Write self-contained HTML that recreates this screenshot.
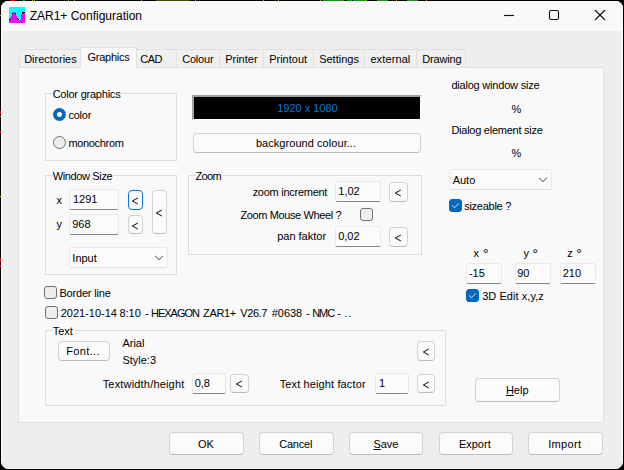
<!DOCTYPE html>
<html><head><meta charset="utf-8"><title>ZAR1+ Configuration</title>
<style>
html,body{margin:0;padding:0;background:#000;overflow:hidden}
body{width:624px;height:470px;position:relative;font-family:"Liberation Sans",sans-serif;font-size:11px;color:#000}
div,span,svg{position:absolute;box-sizing:border-box}
.t{white-space:pre;line-height:14px}
u{text-decoration:underline;text-underline-offset:1px}
#win{left:1px;top:1px;width:622px;height:468px;background:#eeeeee;border-radius:7px;border:1px solid #fcfcfc}
#tb{left:1px;top:1px;width:622px;height:30px;background:#f9f9f9;border-radius:7px 7px 0 0}
#panel{left:18px;top:67px;width:586px;height:356px;background:#f9f9f9;border:1px solid #e0e0e0}
.tab{top:49px;height:19px;background:#f0f0f0;border:1px solid #e0e0e0;border-bottom:none}
.tab.sel{top:47px;height:21px;background:#f9f9f9;border-bottom:none}
.gb{border:1px solid #dcdcdc}
.gl{background:#f9f9f9;height:12px}
.btn{background:#fbfbfb;border:1px solid #d2d2d2;border-bottom-color:#bcbcbc;border-radius:4px}
.btn.f{border:1.5px solid #0b72d0;border-bottom-color:#0b72d0}
.in{background:#fbfbfb;border:1px solid #e9e9e9;border-bottom:1px solid #868686;border-radius:2.5px}
.cmb{background:#fbfbfb;border:1px solid #e9e9e9;border-bottom-color:#dcdcdc;border-radius:2px}
.cb{width:13px;height:13px;border:1px solid #707070;border-radius:3px;background:#eeeeee}
.cb.on{border-color:#0067c0;background:#0067c0}
.rb{width:13px;height:13px;border:1px solid #707070;border-radius:50%;background:#eeeeee}
.rb.on{border:4px solid #0067c0;background:#fff}
</style></head>
<body>
<div style="left:11px;top:0;width:4px;height:1px;background:#d01010"></div><div style="left:23px;top:0;width:2px;height:1px;background:#10c010"></div><div style="left:32px;top:0;width:1px;height:1px;background:#b0b000"></div><div style="left:34px;top:0;width:1px;height:1px;background:#b0b000"></div><div style="left:68px;top:0;width:1px;height:1px;background:#b0b000"></div><div style="left:74px;top:0;width:1px;height:1px;background:#b0b000"></div><div style="left:141px;top:0;width:1px;height:1px;background:#b0b000"></div><div style="left:156px;top:0;width:34px;height:1px;background:#4a4a00"></div><div style="left:195px;top:0;width:1px;height:1px;background:#b0b000"></div><div style="left:263px;top:0;width:1px;height:1px;background:#b0b000"></div><div style="left:278px;top:0;width:1px;height:1px;background:#b0b000"></div><div style="left:320px;top:0;width:1px;height:1px;background:#b0b000"></div><div style="left:323px;top:0;width:21px;height:1px;background:#0c9a0c"></div><div style="left:347px;top:0;width:5px;height:1px;background:#0c9a0c"></div><div style="left:353px;top:0;width:13px;height:1px;background:#0c9a0c"></div><div style="left:366px;top:0;width:1px;height:1px;background:#b0b000"></div><div style="left:377px;top:0;width:11px;height:1px;background:#0c9a0c"></div><div style="left:396px;top:0;width:1px;height:1px;background:#b0b000"></div><div style="left:407px;top:0;width:11px;height:1px;background:#0c9a0c"></div><div style="left:426px;top:0;width:1px;height:1px;background:#b0b000"></div><div style="left:0;top:15px;width:1px;height:1px;background:#c0c000"></div><div style="left:0;top:111px;width:1px;height:3px;background:#d01010"></div><div style="left:0;top:116px;width:1px;height:1px;background:#c0c000"></div><div style="left:0;top:131px;width:1px;height:2px;background:#d01010"></div><div style="left:0;top:196px;width:1px;height:1px;background:#c0c000"></div><div style="left:0;top:258px;width:1px;height:4px;background:#d01010"></div><div style="left:0;top:265px;width:1px;height:2px;background:#d01010"></div>
<div id="win"></div><div id="tb"></div>
<svg style="left:9px;top:7px" width="16" height="16" viewBox="0 0 16 16" shape-rendering="crispEdges"><rect width="16" height="16" fill="#00ffff"/><rect x="4" y="5" width="2" height="1" fill="#ff00ff"/><rect x="13" y="5" width="3" height="1" fill="#000"/><rect x="3" y="6" width="1" height="1" fill="#000"/><rect x="4" y="6" width="2" height="1" fill="#ff00ff"/><rect x="6" y="6" width="1" height="1" fill="#000"/><rect x="13" y="6" width="1" height="1" fill="#000"/><rect x="14" y="6" width="2" height="1" fill="#ff00ff"/><rect x="3" y="7" width="4" height="1" fill="#ff00ff"/><rect x="13" y="7" width="3" height="1" fill="#ff00ff"/><rect x="3" y="8" width="4" height="1" fill="#ff00ff"/><rect x="12" y="8" width="1" height="1" fill="#000"/><rect x="13" y="8" width="3" height="1" fill="#ff00ff"/><rect x="2" y="9" width="6" height="1" fill="#ff00ff"/><rect x="12" y="9" width="4" height="1" fill="#ff00ff"/><rect x="2" y="10" width="6" height="1" fill="#ff00ff"/><rect x="12" y="10" width="4" height="1" fill="#ff00ff"/><rect x="1" y="11" width="1" height="1" fill="#000"/><rect x="2" y="11" width="6" height="1" fill="#ff00ff"/><rect x="8" y="11" width="1" height="1" fill="#000"/><rect x="12" y="11" width="4" height="1" fill="#ff00ff"/><rect x="0" y="12" width="1" height="1" fill="#000"/><rect x="1" y="12" width="8" height="1" fill="#ff00ff"/><rect x="9" y="12" width="1" height="1" fill="#000"/><rect x="10" y="12" width="1" height="1" fill="#fff"/><rect x="12" y="12" width="4" height="1" fill="#ff00ff"/><rect x="0" y="13" width="16" height="1" fill="#ff00ff"/><rect x="0" y="14" width="16" height="1" fill="#ff00ff"/><rect x="0" y="15" width="16" height="1" fill="#ff00ff"/></svg>
<svg style="left:495px;top:1px" width="128" height="30" viewBox="495 1 128 30" fill="none" stroke="#111" stroke-width="1.15"><path d="M504 15.5H514"/><rect x="549.5" y="10.5" width="9" height="9" rx="1.5"/><path d="M595 10L605 20M605 10L595 20"/></svg>
<div class="tab" style="left:19px;top:49px;width:62px;height:19px;"></div>
<div class="tab" style="left:136px;top:49px;width:41px;height:19px;"></div>
<div class="tab" style="left:176px;top:49px;width:44px;height:19px;"></div>
<div class="tab" style="left:219px;top:49px;width:45px;height:19px;"></div>
<div class="tab" style="left:263px;top:49px;width:51px;height:19px;"></div>
<div class="tab" style="left:313px;top:49px;width:52px;height:19px;"></div>
<div class="tab" style="left:364px;top:49px;width:53px;height:19px;"></div>
<div class="tab" style="left:416px;top:49px;width:50px;height:19px;"></div>
<div id="panel"></div>
<div class="tab sel" style="left:80px;top:47px;width:57px;height:21px;"></div>
<div class="gb" style="left:45px;top:93px;width:132px;height:68px;"></div>
<div class="gl" style="left:53px;top:87px;width:67.5px;height:12px;"></div>
<div class="gb" style="left:45px;top:175px;width:132px;height:100px;"></div>
<div class="gl" style="left:53px;top:169px;width:59.5px;height:12px;"></div>
<div class="gb" style="left:188px;top:175px;width:234px;height:80px;"></div>
<div class="gl" style="left:196px;top:169px;width:25.5px;height:12px;"></div>
<div class="gb" style="left:45px;top:330px;width:401px;height:76px;"></div>
<div class="gl" style="left:53px;top:324px;width:21.5px;height:12px;"></div>
<div class="rb on" style="left:53px;top:108px;width:13px;height:13px;"></div>
<div class="rb" style="left:53px;top:136px;width:13px;height:13px;"></div>
<div class="in" style="left:69px;top:189px;width:50px;height:21px;"></div>
<div class="in" style="left:69px;top:214px;width:50px;height:21px;"></div>
<div class="in" style="left:335px;top:181px;width:46px;height:21px;"></div>
<div class="in" style="left:335px;top:226px;width:46px;height:21px;"></div>
<div class="in" style="left:192px;top:373px;width:34px;height:21px;"></div>
<div class="in" style="left:375px;top:373px;width:34px;height:21px;"></div>
<div class="in" style="left:466px;top:263px;width:36px;height:21px;"></div>
<div class="in" style="left:515px;top:263px;width:36px;height:21px;"></div>
<div class="in" style="left:560px;top:263px;width:36px;height:21px;"></div>
<div class="cmb" style="left:69px;top:247px;width:99px;height:21px;"></div>
<svg style="left:154px;top:254.7px" width="10" height="6" viewBox="0 0 10 6" fill="none" stroke="#4a4a4a" stroke-width="1"><path d="M1 0.8L5 4.6L9 0.8"/></svg>
<div class="cmb" style="left:449px;top:169px;width:103px;height:21px;"></div>
<svg style="left:538px;top:176.7px" width="10" height="6" viewBox="0 0 10 6" fill="none" stroke="#4a4a4a" stroke-width="1"><path d="M1 0.8L5 4.6L9 0.8"/></svg>
<div class="" style="left:192px;top:95px;width:229px;height:25px;background:#000;border-top:2px solid #a0a0a0;border-left:2px solid #a0a0a0;border-right:1px solid #fff;border-bottom:1px solid #fff"></div>
<div class="btn " style="left:193px;top:133px;width:228px;height:20px;"></div>
<div class="btn f" style="left:128px;top:190px;width:15px;height:20px;"></div>
<div class="btn " style="left:128px;top:215px;width:15px;height:19px;"></div>
<div class="btn " style="left:152px;top:190px;width:15px;height:44px;"></div>
<div class="btn " style="left:389px;top:182px;width:19px;height:20px;"></div>
<div class="btn " style="left:389px;top:227px;width:19px;height:20px;"></div>
<div class="btn " style="left:58px;top:341px;width:52px;height:20px;"></div>
<div class="btn " style="left:417px;top:341px;width:18px;height:20px;"></div>
<div class="btn " style="left:230px;top:374px;width:19px;height:19px;"></div>
<div class="btn " style="left:417px;top:374px;width:18px;height:19px;"></div>
<div class="btn " style="left:475px;top:378px;width:85px;height:24px;"></div>
<div class="btn " style="left:169px;top:432px;width:75px;height:23px;"></div>
<div class="btn " style="left:259px;top:432px;width:75px;height:23px;"></div>
<div class="btn " style="left:349px;top:432px;width:74px;height:23px;"></div>
<div class="btn " style="left:439px;top:432px;width:74px;height:23px;"></div>
<div class="btn " style="left:528px;top:432px;width:75px;height:23px;"></div>
<div class="cb" style="left:360px;top:208px;width:13px;height:13px;"></div>
<div class="cb" style="left:44px;top:286px;width:13px;height:13px;"></div>
<div class="cb" style="left:45px;top:306px;width:13px;height:13px;"></div>
<div class="cb on" style="left:449px;top:199px;width:13px;height:13px;"></div>
<svg style="left:449px;top:199px" width="13" height="13" viewBox="0 0 13 13" fill="none" stroke="#eaf2fa" stroke-width="0.95"><path d="M3.1 6.5L5.6 8.7L9.8 4.4"/></svg>
<div class="cb on" style="left:466px;top:289px;width:13px;height:13px;"></div>
<svg style="left:466px;top:289px" width="13" height="13" viewBox="0 0 13 13" fill="none" stroke="#eaf2fa" stroke-width="0.95"><path d="M3.1 6.5L5.6 8.7L9.8 4.4"/></svg>
<svg style="left:131.05px;top:195.5px" width="8" height="10" viewBox="0 0 8 10" fill="none" stroke="#000" stroke-width="0.95"><path d="M6.9 2L1.3 5L6.9 8"/></svg>
<svg style="left:131.05px;top:220.8px" width="8" height="10" viewBox="0 0 8 10" fill="none" stroke="#000" stroke-width="0.95"><path d="M6.9 2L1.3 5L6.9 8"/></svg>
<svg style="left:155.05px;top:207.6px" width="8" height="10" viewBox="0 0 8 10" fill="none" stroke="#000" stroke-width="0.95"><path d="M6.9 2L1.3 5L6.9 8"/></svg>
<svg style="left:394px;top:187.75px" width="8" height="10" viewBox="0 0 8 10" fill="none" stroke="#000" stroke-width="0.95"><path d="M6.9 2L1.3 5L6.9 8"/></svg>
<svg style="left:394px;top:232.5px" width="8" height="10" viewBox="0 0 8 10" fill="none" stroke="#000" stroke-width="0.95"><path d="M6.9 2L1.3 5L6.9 8"/></svg>
<svg style="left:422.25px;top:346.6px" width="8" height="10" viewBox="0 0 8 10" fill="none" stroke="#000" stroke-width="0.95"><path d="M6.9 2L1.3 5L6.9 8"/></svg>
<svg style="left:235.25px;top:379.1px" width="8" height="10" viewBox="0 0 8 10" fill="none" stroke="#000" stroke-width="0.95"><path d="M6.9 2L1.3 5L6.9 8"/></svg>
<svg style="left:422.25px;top:379.6px" width="8" height="10" viewBox="0 0 8 10" fill="none" stroke="#000" stroke-width="0.95"><path d="M6.9 2L1.3 5L6.9 8"/></svg>
<span class="t" style="left:29.65px;top:8.84px;font-size:12px;">ZAR1+ Configuration</span>
<span class="t" style="left:24.15px;top:52.19px;">Directories</span>
<span class="t" style="left:87.40px;top:50.19px;letter-spacing:-0.231px;">Graphics</span>
<span class="t" style="left:140.15px;top:52.19px;letter-spacing:-0.435px;">CAD</span>
<span class="t" style="left:182.15px;top:52.19px;letter-spacing:-0.174px;">Colour</span>
<span class="t" style="left:225.15px;top:52.19px;">Printer</span>
<span class="t" style="left:269.15px;top:52.19px;">Printout</span>
<span class="t" style="left:319.15px;top:52.19px;">Settings</span>
<span class="t" style="left:370.40px;top:52.19px;letter-spacing:0.111px;">external</span>
<span class="t" style="left:422.15px;top:52.19px;letter-spacing:-0.155px;">Drawing</span>
<span class="t" style="left:52.65px;top:87.19px;letter-spacing:-0.224px;">Color graphics</span>
<span class="t" style="left:68.40px;top:108.19px;letter-spacing:-0.217px;">color</span>
<span class="t" style="left:68.40px;top:136.19px;letter-spacing:-0.330px;">monochrom</span>
<span class="t" style="left:52.65px;top:169.19px;letter-spacing:-0.354px;">Window Size</span>
<span class="t" style="left:56.40px;top:193.19px;">x</span>
<span class="t" style="left:72.90px;top:192.19px;">1291</span>
<span class="t" style="left:56.40px;top:217.19px;">y</span>
<span class="t" style="left:72.15px;top:217.19px;">968</span>
<span class="t" style="left:72.33px;top:251.19px;">Input</span>
<span class="t" style="left:277.15px;top:101.19px;color:#0b76d8;">1920 x 1080</span>
<span class="t" style="left:255.90px;top:136.19px;letter-spacing:0.057px;">background colour...</span>
<span class="t" style="left:195.40px;top:169.19px;letter-spacing:-0.580px;">Zoom</span>
<span class="t" style="left:252.65px;top:185.19px;letter-spacing:-0.270px;">zoom increment</span>
<span class="t" style="left:338.32px;top:184.19px;">1,02</span>
<span class="t" style="left:240.40px;top:208.19px;letter-spacing:-0.379px;">Zoom Mouse Wheel ?</span>
<span class="t" style="left:277.15px;top:229.19px;">pan faktor</span>
<span class="t" style="left:338.15px;top:229.19px;">0,02</span>
<span class="t" style="left:451.40px;top:78.19px;letter-spacing:-0.206px;">dialog window size</span>
<span class="t" style="left:511.40px;top:102.19px;">%</span>
<span class="t" style="left:451.40px;top:123.19px;letter-spacing:-0.253px;">Dialog element size</span>
<span class="t" style="left:511.40px;top:146.19px;">%</span>
<span class="t" style="left:452.65px;top:173.19px;">Auto</span>
<span class="t" style="left:464.15px;top:199.19px;letter-spacing:-0.260px;">sizeable ?</span>
<span class="t" style="left:473.40px;top:246.19px;">x</span>
<span class="t" style="left:482.90px;top:247.15px;font-size:14px;">°</span>
<span class="t" style="left:523.50px;top:246.19px;">y</span>
<span class="t" style="left:532.40px;top:247.15px;font-size:14px;">°</span>
<span class="t" style="left:567.15px;top:246.19px;">z</span>
<span class="t" style="left:576.15px;top:247.15px;font-size:14px;">°</span>
<span class="t" style="left:468.90px;top:266.19px;">-15</span>
<span class="t" style="left:517.15px;top:266.19px;">90</span>
<span class="t" style="left:562.65px;top:266.19px;">210</span>
<span class="t" style="left:482.15px;top:289.19px;letter-spacing:0.065px;">3D Edit x,y,z</span>
<span class="t" style="left:59.40px;top:286.19px;letter-spacing:-0.174px;">Border line</span>
<span class="t" style="left:60.65px;top:306.19px;">2021-10-14</span>
<span class="t" style="left:119.40px;top:306.19px;">8:10</span>
<span class="t" style="left:145.15px;top:306.19px;">-</span>
<span class="t" style="left:150.95px;top:306.19px;letter-spacing:-1.000px;">HEXAGON</span>
<span class="t" style="left:203.05px;top:306.19px;letter-spacing:-0.363px;">ZAR1+</span>
<span class="t" style="left:240.35px;top:306.19px;letter-spacing:-0.435px;">V26.7</span>
<span class="t" style="left:271.65px;top:306.19px;">#0638</span>
<span class="t" style="left:305.90px;top:306.19px;">-</span>
<span class="t" style="left:312.15px;top:306.19px;letter-spacing:-1.000px;">NMC</span>
<span class="t" style="left:337.35px;top:306.19px;">-</span>
<span class="t" style="left:344.15px;top:306.19px;letter-spacing:1.000px;">..</span>
<span class="t" style="left:52.65px;top:324.19px;">Text</span>
<span class="t" style="left:66.15px;top:344.19px;letter-spacing:0.380px;">Font...</span>
<span class="t" style="left:122.40px;top:336.19px;">Arial</span>
<span class="t" style="left:122.40px;top:353.19px;">Style:3</span>
<span class="t" style="left:102.65px;top:377.19px;letter-spacing:0.184px;">Textwidth/height</span>
<span class="t" style="left:194.65px;top:376.19px;">0,8</span>
<span class="t" style="left:279.65px;top:377.19px;letter-spacing:0.127px;">Text height factor</span>
<span class="t" style="left:378.90px;top:376.19px;">1</span>
<span class="t" style="left:505.90px;top:383.19px;"><u>H</u>elp</span>
<span class="t" style="left:197.90px;top:437.19px;">OK</span>
<span class="t" style="left:279.15px;top:437.19px;letter-spacing:-0.204px;">Cancel</span>
<span class="t" style="left:373.40px;top:437.19px;"><u>S</u>ave</span>
<span class="t" style="left:458.90px;top:437.19px;">Export</span>
<span class="t" style="left:548.15px;top:437.19px;letter-spacing:0.372px;">Import</span>
</body></html>
